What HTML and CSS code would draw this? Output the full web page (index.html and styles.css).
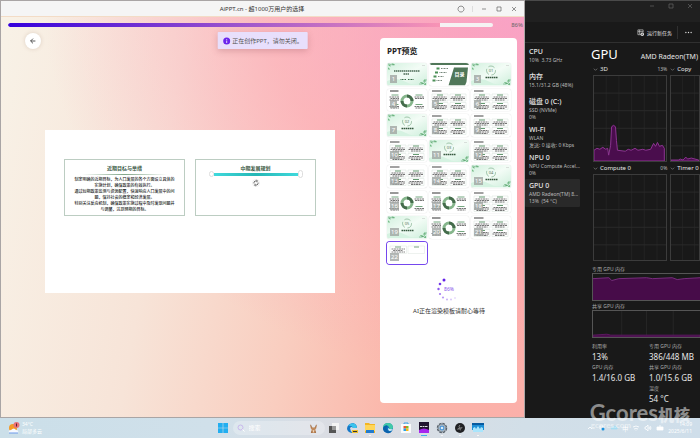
FILE: index.html
```html
<!DOCTYPE html>
<html lang="zh-CN">
<head>
<meta charset="UTF-8">
<meta name="viewport" content="width=device-width, initial-scale=1.0">
<title>AiPPT.cn - 超1000万用户的选择</title>
<link rel="stylesheet" href="styles.css">
</head>
<body>

<!-- slide thumbnails -->
<svg class="defs" width="0" height="0" aria-hidden="true">
    <defs>
        <linearGradient id="mint" x1="0" y1="0" x2="1" y2="1">
            <stop offset="0" stop-color="#d3f1df"/>
            <stop offset=".5" stop-color="#f3fcf6"/>
            <stop offset="1" stop-color="#cdeedb"/>
        </linearGradient>
        <symbol id="leaves" viewBox="0 0 80 45">
            <rect width="80" height="45" fill="url(#mint)"/>
            <path d="M0 36Q20 27 38 38T80 33V45H0z" fill="#d5f2e1"/>
            <path d="M2 3q5-1 6 4q-5 0-6-4M9 1q6-1 7 3q-5 2-7-3M2 9q4 0 3 5q-4-1-3-5M77 32q-5 1-4 6q5-1 4-6M66 38q5-1 8 3q-5 3-8-3M78 40q-4 0-4 4h4z" fill="#72b884"/>
            <path d="M1 1q8 3 12 3M64 42q10 2 15-9" fill="none" stroke="#539768"/>
            <path d="M70 5h6" stroke="#888" stroke-dasharray="1 1"/>
        </symbol>
        <symbol id="cover" viewBox="0 0 80 45">
            <use href="#leaves" width="80" height="45"/>
            <path d="M14 16h52M33 22h12" stroke="#4b6b55" stroke-width="3" stroke-dasharray="3 1"/>
            <path d="M27 33h12M42 33h12" stroke="#3d6c4b" stroke-width="2" stroke-dasharray="2 1"/>
        </symbol>
        <symbol id="contents" viewBox="0 0 80 45">
            <rect width="80" height="45" fill="#fff"/>
            <path d="M0 0h80v4H4zM50 9h28l-3 29-3 7H39z" fill="#507759"/>
            <path d="M24 11h14M21 19h14M18 27h12M15 35h12" stroke="#75877a" stroke-width="2" stroke-dasharray="2 1"/>
            <path d="M15 11h6M12 19h6M9 27h6M7 35h6" stroke="#4b9057" stroke-width="4"/>
            <text x="51" y="26" font-size="10" font-weight="bold" fill="#fff">目录</text>
        </symbol>
        <symbol id="section" viewBox="0 0 80 45">
            <use href="#leaves" width="80" height="45"/>
            <circle cx="40" cy="15" r="9" fill="none" stroke="#579267" stroke-dasharray="13 5"/>
            <path d="M29 29h25" stroke="#36583f" stroke-width="3" stroke-dasharray="3 1"/>
        </symbol>
        <symbol id="donut" viewBox="0 0 80 45">
            <rect width="80" height="45" fill="#fff"/>
            <path d="M6 4h17" stroke="#333" stroke-width="2"/>
            <path d="M9 12h14M57 12h14M9 31h14M57 31h14" stroke="#75a780" stroke-width="2"/>
            <path d="M5 16h20M7 19h17M5 22h20M5 35h20M7 38h17M55 16h20M56 19h18M55 35h20M57 38h16" stroke="#777" stroke-width="2" stroke-dasharray="4 1"/>
            <circle cx="40" cy="24" r="10" fill="none" stroke="#86b68c" stroke-width="6"/>
            <path d="M40 14a10 10 0 0 1 10 10M40 34a10 10 0 0 1-10-10" fill="none" stroke="#456c4c" stroke-width="6"/>
        </symbol>
        <symbol id="cards" viewBox="0 0 80 45">
            <rect width="80" height="45" fill="#fff"/>
            <path d="M6 4h19" stroke="#444" stroke-width="2"/>
            <path d="M6 10h32v14H6zM42 10h32v14H42zM6 27h32v14H6zM42 27h32v14H42z" fill="#fff" stroke="#d7e2da"/>
            <path d="M16 12h12M52 12h12M16 29h12M52 29h12" stroke="#659971" stroke-width="2"/>
            <path d="M9 16h26M7 19h30M11 22h22M45 16h26M43 19h30M48 22h20M9 33h26M7 36h30M11 39h22M45 33h26M43 36h30M48 39h20" stroke="#777" stroke-width="2" stroke-dasharray="4 1"/>
        </symbol>
        <symbol id="draft" viewBox="0 0 80 45">
            <rect width="80" height="45" fill="#fff"/>
            <path d="M6 8h33v15H6zM42 8h33v15H42z" fill="#fff" stroke="#dde5df"/>
            <path d="M16 10h12M54 10h10" stroke="#78a382" stroke-width="2"/>
            <path d="M9 14h27M12 17h20M9 20h27" stroke="#888" stroke-width="2" stroke-dasharray="4 1"/>
        </symbol>
        <pattern id="grid" width="13" height="18" patternUnits="userSpaceOnUse">
            <path d="M13 0V18M0 17.5H13" fill="none" stroke="#292929"/>
        </pattern>
    </defs>
</svg>

<div class="screen">
    <div class="windows">

        <main class="app">
            <header class="titlebar">
                <h1>AiPPT.cn - 超1000万用户的选择</h1>
                <div class="window-buttons">
                    <button aria-label="刷新"><svg viewBox="0 0 8 8"><path d="M3 1.2a3 3 0 1 0 2 0M3 1.2h2" /></svg></button>
                    <span class="separator"></span>
                    <button aria-label="最小化"><svg viewBox="0 0 8 8"><path d="M2 4h4"/></svg></button>
                    <button aria-label="最大化"><svg viewBox="0 0 8 8"><path d="M2 2h4v4H2z"/></svg></button>
                    <button aria-label="关闭"><svg viewBox="0 0 8 8"><path d="M2 2l4 4M6 2L2 6"/></svg></button>
                </div>
            </header>

            <div class="progress-row">
                <div class="progress" role="progressbar" aria-label="生成进度" aria-valuenow="86"><div class="progress-fill"></div></div>
                <span>86%</span>
            </div>

            <div class="workspace">
                <div class="stage">
                    <button class="back" aria-label="返回"><svg viewBox="0 0 10 10"><path d="M8 5H2M5 2L2 5l3 3"/></svg></button>
                    <div class="slide">
                        <section class="slide-box">
                            <h2>近期目标与举措</h2>
                            <hr>
                            <p>制定明确的近期目标，为人口发展的各个方面设立具体的<br>实施计划，确保政策的有效执行。<br>通过短期政策监测与资源配置，快速响应人口发展中的问<br>题，保持社会的稳定和经济发展。<br>特别关注反应机制，确保政策实施过程中及时发现问题并<br>与调整，达到预期的目标。</p>
                        </section>
                        <section class="slide-box">
                            <h2>中期发展规划</h2>
                            <div class="selected-line"><i></i><b></b><i class="tall"></i></div>
                            <svg class="rotate" viewBox="0 0 8 8"><circle cx="4" cy="4" r="3.5" fill="#fff" stroke="#ddd" stroke-width=".5"/><path d="M2 4.5V3l1-1h2.2M6 3.5V5L5 6H2.8M4.5 1.2l1 .8-1 .8M3.5 5.2l-1 .8 1 .8" fill="none" stroke="#333" stroke-width=".7"/></svg>
                        </section>
                    </div>
                </div>

                <aside class="preview">
                    <h2>PPT预览</h2>
                    <div class="thumbs">
                        <div class="thumb"><svg><use href="#cover"/></svg><span>1</span></div>
                        <div class="thumb"><svg><use href="#contents"/></svg></div>
                        <div class="thumb"><svg><use href="#section"/></svg><em>01</em><span>3</span></div>
                        <div class="thumb"><svg><use href="#donut"/></svg><span>4</span></div>
                        <div class="thumb"><svg><use href="#cards"/></svg><span>5</span></div>
                        <div class="thumb"><svg><use href="#cards"/></svg><span>6</span></div>
                        <div class="thumb"><svg><use href="#section"/></svg><em>02</em><span>7</span></div>
                        <div class="thumb"><svg><use href="#cards"/></svg><span>8</span></div>
                        <div class="thumb"><svg><use href="#cards"/></svg><span>9</span></div>
                        <div class="thumb"><svg><use href="#cards"/></svg><span>10</span></div>
                        <div class="thumb"><svg><use href="#section"/></svg><em>03</em><span>11</span></div>
                        <div class="thumb"><svg><use href="#cards"/></svg><span>12</span></div>
                        <div class="thumb"><svg><use href="#cards"/></svg><span>13</span></div>
                        <div class="thumb"><svg><use href="#cards"/></svg><span>14</span></div>
                        <div class="thumb"><svg><use href="#section"/></svg><em>04</em><span>15</span></div>
                        <div class="thumb"><svg><use href="#donut"/></svg><span>16</span></div>
                        <div class="thumb"><svg><use href="#donut"/></svg><span>17</span></div>
                        <div class="thumb"><svg><use href="#cards"/></svg><span>18</span></div>
                        <div class="thumb"><svg><use href="#section"/></svg><em>05</em><span>19</span></div>
                        <div class="thumb"><svg><use href="#donut"/></svg><span>20</span></div>
                        <div class="thumb"><svg><use href="#cards"/></svg><span>21</span></div>
                        <div class="thumb current"><svg><use href="#draft"/></svg><span>22</span></div>
                    </div>
                    <div class="loading">
                        <div class="spinner">
                            <svg viewBox="0 0 24 24" fill="#6420e8">
                                <circle cx="7" cy="3" r="1.5"/>
                                <circle cx="3" cy="7" r="1.3" opacity=".9"/>
                                <circle cx="1.5" cy="12" r="1.2" opacity=".75"/>
                                <circle cx="3" cy="17" r="1.1" opacity=".6"/>
                                <circle cx="6" cy="20.500" r="1.1" opacity=".45"/>
                                <circle cx="10" cy="22.500" r="1" opacity=".35"/>
                                <circle cx="14" cy="22.500" r="1" opacity=".25"/>
                                <circle cx="18" cy="21" r="1" opacity=".15"/>
                            </svg>
                            <span>86%</span>
                        </div>
                        <p>AI正在渲染模板请耐心等待</p>
                    </div>
                </aside>
            </div>

            <div class="toast" role="status">
                <svg viewBox="0 0 8 8"><circle cx="4" cy="4" r="3.500" fill="#6b25ec"/><path d="M4 2v.8M4 3.500V6" stroke="#fff" stroke-width=".8"/></svg>
                正在创作PPT，请勿关闭。
            </div>
        </main>

        <section class="taskmgr">
            <header class="tm-title">
                <button aria-label="最小化"><svg viewBox="0 0 8 8"><path d="M2 4h4"/></svg></button>
                <button aria-label="最大化"><svg viewBox="0 0 8 8"><path d="M2 2h4v4H2z"/></svg></button>
                <button aria-label="关闭"><svg viewBox="0 0 8 8"><path d="M2 2l4 4M6 2L2 6"/></svg></button>
            </header>
            <div class="tm-toolbar">
                <button class="run-task">
                    <svg viewBox="0 0 8 8"><path d="M4 6.500H1V1h6v3M1 3h6M3 1v5" fill="none" stroke="#ddd" stroke-width=".7"/><circle cx="6" cy="6" r="2" fill="#eee"/><path d="M5 6h2M6 5v2" stroke="#222" stroke-width=".6"/></svg>
                    运行新任务
                </button>
                <button class="more" aria-label="更多"><svg viewBox="0 0 8 8" fill="#ddd"><circle cx="1" cy="4" r=".8"/><circle cx="4" cy="4" r=".8"/><circle cx="7" cy="4" r=".8"/></svg></button>
            </div>
            <div class="tm-body">
                <ul class="tm-list">
                    <li><h3>CPU</h3><p>10%&nbsp; 3.73 GHz</p></li>
                    <li><h3>内存</h3><p>15.1/31.2 GB (48%)</p></li>
                    <li><h3>磁盘 0 (C:)</h3><p>SSD (NVMe)</p><p>0%</p></li>
                    <li><h3>Wi-Fi</h3><p>WLAN</p><p>发送: 0 接收: 0 Kbps</p></li>
                    <li><h3>NPU 0</h3><p>NPU Compute Accel...</p><p>0%</p></li>
                    <li class="active"><h3>GPU 0</h3><p>AMD Radeon(TM) 8...</p><p>13%&nbsp; (54 °C)</p></li>
                </ul>
                <div class="tm-detail">
                    <div class="tm-heading"><h2>GPU</h2><span>AMD Radeon(TM)</span></div>
                    <div class="engines">
                        <figure>
                            <figcaption><svg viewBox="0 0 6 6"><path d="M1 2l2 2 2-2"/></svg>3D<small>13%</small></figcaption>
                            <svg class="chart" viewBox="0 0 74 87" preserveAspectRatio="none">
                                <rect width="74" height="87" fill="url(#grid)"/>
                                <path d="M0 87V76l3-2 3 1 3-2 3 2 2-1 1 7 2-10 1-19q2-3 4 0l1 14 1 10 8 1 3-2 3 1 4-2 3 2 5-1 3 1 5-1 3-6 2 3 2-4 2 4 3-1 2 3v13z" fill="#4a0d4d" stroke="#8d3592"/>
                            </svg>
                        </figure>
                        <figure>
                            <figcaption><svg viewBox="0 0 6 6"><path d="M1 2l2 2 2-2"/></svg>Copy</figcaption>
                            <svg class="chart" viewBox="0 0 30 87" preserveAspectRatio="none">
                                <rect width="30" height="87" fill="url(#grid)"/>
                                <path d="M0 87v-1h8l2-1 3 1 3-3 2 2 4-1 8 2v1z" fill="#4a0d4d" stroke="#8d3592"/>
                            </svg>
                        </figure>
                        <figure>
                            <figcaption><svg viewBox="0 0 6 6"><path d="M1 2l2 2 2-2"/></svg>Compute 0<small>0%</small></figcaption>
                            <svg class="chart" viewBox="0 0 74 87" preserveAspectRatio="none"><rect width="74" height="87" fill="url(#grid)"/></svg>
                        </figure>
                        <figure>
                            <figcaption><svg viewBox="0 0 6 6"><path d="M1 2l2 2 2-2"/></svg>Timer 0</figcaption>
                            <svg class="chart" viewBox="0 0 30 87" preserveAspectRatio="none"><rect width="30" height="87" fill="url(#grid)"/></svg>
                        </figure>
                    </div>
                    <figure class="memory">
                        <figcaption>专用 GPU 内存</figcaption>
                        <svg class="chart" viewBox="0 0 108 28" preserveAspectRatio="none"><path d="M0 28V5l16-1 3 3 7-2 28-1 6 1 20-1 5 2 7-1 16-1v24z" fill="#470c49"/><path d="M0 5l16-1 3 3 7-2 28-1 6 1 20-1 5 2 7-1 16-1" fill="none" stroke="#7a2e7f"/></svg>
                    </figure>
                    <figure class="memory">
                        <figcaption>共享 GPU 内存</figcaption>
                        <svg class="chart" viewBox="0 0 108 28" preserveAspectRatio="none"><path d="M29 0V28M54 0V28M81 0V28" stroke="#262626"/><path d="M0 28v-2l14-1 4 1h90v2z" fill="#470c49" stroke="#5c1a60"/></svg>
                    </figure>
                    <dl class="stats">
                        <div><dt>利用率</dt><dd>13%</dd></div>
                        <div><dt>专用 GPU 内存</dt><dd>386/448 MB</dd></div>
                        <div><dt>GPU 内存</dt><dd>1.4/16.0 GB</dd></div>
                        <div><dt>共享 GPU 内存</dt><dd>1.0/15.6 GB</dd></div>
                        <div class="second"><dt>温度</dt><dd>54 °C</dd></div>
                    </dl>
                </div>
            </div>
        </section>
    </div>

    <footer class="taskbar">
        <div class="weather">
            <svg viewBox="0 0 12 12"><circle cx="5" cy="6" r="4" fill="#f49b28"/><path d="M1 11q-1-3 2-3 3-3 5 0 3 0 2 3z" fill="#f5f9ff"/><path d="M1 11h9" stroke="#6f9bea"/><circle cx="8.500" cy="3" r="3" fill="#e8707a"/><path d="M8.500 1.500v3" stroke="#5c1f28"/></svg>
            <p>34°C<br>局部多云</p>
        </div>
        <div class="dock">
            <button aria-label="开始"><svg viewBox="0 0 12 12"><path d="M1 1h4.700v4.700H1zM6.300 1H11v4.700H6.300zM1 6.300h4.700V11H1zM6.300 6.300H11V11H6.300z" fill="#22aef0"/></svg></button>
            <label class="search">
                <svg viewBox="0 0 8 8" fill="none"><circle cx="3.500" cy="3.500" r="2.500" stroke="#c8b8ec"/><path d="M5.500 5.500L7.500 7.500" stroke="#fff"/></svg>
                <input type="text" placeholder="搜索" aria-label="搜索">
                <svg class="deer" viewBox="0 0 10 12"><path d="M1 1l2 3 1 1h2l1-1 2-3-1 5-1 1 1 4H2l1-4-1-1z" fill="#c08a5c"/><path d="M4 8h2l-1 3z" fill="#f1dcc6"/><path d="M2 2l1 3M8 2L7 5M3 11V9M7 11V9" stroke="#7d4f31" stroke-width=".5"/></svg>
            </label>
            <button aria-label="任务视图"><svg viewBox="0 0 12 12"><path d="M4 1h7v7H4z" fill="#f4f4f4"/><path d="M1 4h7v7H1z" fill="#555"/><path d="M4 4h4v4H4z" fill="#999"/></svg></button>
            <button aria-label="Edge Canary"><svg viewBox="0 0 12 12"><path d="M1 7q0-5 6-6 4 1 4 5H7q-1-2-3 0 0 3 3 5Q2 11 1 7" fill="#1678c8"/><path d="M2 4q3-4 7-2 2 2 2 4H7Q6 3 2 4" fill="#3ac3ed"/><path d="M6 8h6v3H6z" fill="#eebf2c"/><path d="M7 9.500h4" stroke="#333"/></svg></button>
            <button class="running" aria-label="文件资源管理器"><svg viewBox="0 0 12 12"><path d="M1 1h4l1 1h5v9H1z" fill="#f3b522"/><path d="M1 3h10v6H1z" fill="#ffd65a"/><path d="M2 8h8v3H2z" fill="#217bce"/></svg></button>
            <button aria-label="Edge"><svg viewBox="0 0 12 12"><circle cx="6" cy="6" r="5" fill="#1277bd"/><path d="M1 6Q1 1 6 1t5 5q-1 2-4 2 1-3-1-4-3-1-5 2" fill="#42c9a8"/><path d="M1 6q2-4 5-2-3 2 0 5 2 1 4 0-2 3-5 2-4-1-4-5" fill="#0c62ad"/><path d="M6 6q2 2 5 1-1 2-3 2T6 6" fill="#d8eefa"/></svg></button>
            <button aria-label="Microsoft Store"><svg viewBox="0 0 12 12"><path d="M4 3V1h4v2" fill="none" stroke="#3ba1e4"/><path d="M1 2h10v9H1z" fill="#f9fbfc"/><path d="M3.500 4H6v2.500H3.500z" fill="#ee5532"/><path d="M6 4h2.500v2.500H6z" fill="#82bb29"/><path d="M3.500 6.500H6V9H3.500z" fill="#25a2e8"/><path d="M6 6.500h2.500V9H6z" fill="#f9b717"/></svg></button>
            <button class="running selected" aria-label="AiPPT"><svg viewBox="0 0 12 12"><path d="M1 0h10v11H1z" fill="#201330"/><path d="M1 8q5-3 10 0v3H1z" fill="#a626ee"/><path d="M2 4.500h8" stroke="#ddd" stroke-dasharray="2 .5"/></svg></button>
            <button class="running" aria-label="设置"><svg viewBox="0 0 12 12" fill="none"><circle cx="6" cy="6" r="4.500" stroke="#59626b" stroke-width="1.500" stroke-dasharray="2.700 .8"/><circle cx="6" cy="6" r="3.500" stroke="#7f8e9b"/><circle cx="6" cy="6" r="2" fill="#d9ecfc" stroke="#247dca"/></svg></button>
            <button class="running" aria-label="OBS"><svg viewBox="0 0 12 12"><circle cx="6" cy="6" r="5" fill="#202124"/><path d="M6 3q-2 1 0 3 2 1 2-1M6 6q-3 0-2 2M6 6q-1 2 1 2" fill="none" stroke="#999" stroke-width=".8"/></svg></button>
            <button class="running" aria-label="任务管理器"><svg viewBox="0 0 12 12"><path d="M0 1h12v7H0z" fill="#1d8fd6"/><path d="M1 6l2-1 1 2 2-3 2 3 1-2 2 1v4H1z" fill="#a9e5fc"/><path d="M0 1h12v2H0z" fill="#085a9f"/></svg></button>
        </div>
        <div class="tray">
            <svg viewBox="0 0 8 8"><path d="M2 5l2-2 2 2"/></svg>
            <svg viewBox="0 0 8 8"><path d="M2 5V2h3v3z"/><circle cx="5" cy="5" r="1.500" fill="#1a91dd" stroke="none"/></svg>
            <svg viewBox="0 0 8 8"><path d="M1 5q0-2 2-2 2-2 3 0 2 1 1 2z" fill="#a6ddf2" stroke="#a6ddf2"/></svg>
            <span>中</span>
            <svg viewBox="0 0 8 8"><path d="M1 3q3-2 6 0M2 5q2-1 4 0M4 6.500v.5"/></svg>
            <svg viewBox="0 0 8 8"><path d="M1 3h1l2-2v6L2 5H1zM5 3q1 1 0 2M6 2q2 2 0 4"/></svg>
            <svg viewBox="0 0 8 8"><path d="M1 3h6v3H1zM3 2h2" fill="#fff"/></svg>
            <p>14:09<br>2025/6/11</p>
        </div>
    </footer>

    <div class="watermark"><strong>Gcores<b>机核</b></strong><span>gcores.com</span></div>
</div>

</body>
</html>
```
FILE: styles.css
```css
* {
    box-sizing: border-box;
    margin: 0;
    padding: 0;
}

body {
    font-family: "Noto Sans", "Noto Sans CJK SC", sans-serif;
    font-size: 6px;
    color: #333;
}

button {
    display: flex;
    align-items: center;
    justify-content: center;
    border: none;
    background: none;
    font: inherit;
    color: inherit;
    cursor: pointer;
}

svg {
    display: block;
    flex: none;
}

.defs {
    position: absolute;
}

.screen {
    position: relative;
    display: flex;
    flex-direction: column;
    height: 100vh;
    overflow: hidden;
}

.windows {
    flex: 1;
    display: grid;
    grid-template-columns: 3fr 1fr;
    min-height: 0;
}

/* AiPPT window */
.app {
    position: relative;
    display: flex;
    flex-direction: column;
    min-width: 0;
    border: 1px solid #a9a5a5;
    background:
        radial-gradient(ellipse at 100% 0%, rgba(248, 158, 207, 0.8), rgba(255, 156, 179, 0.5) 35%, rgba(255, 170, 170, 0) 65%),
        linear-gradient(100deg, #f8f2e7 0%, #f7e4d8 32%, #f9cdbf 58%, #fbb4a8 80%, #fbb0aa 100%);
}

.titlebar {
    display: flex;
    align-items: center;
    justify-content: center;
    height: 16px;
    flex: none;
    background: #f5f5f5;
    border-bottom: 1px solid #f3dcc6;
}

.titlebar h1 {
    flex: 1;
    padding-left: 66px;
    text-align: center;
    font-size: 6px;
    font-weight: normal;
}

.window-buttons {
    display: flex;
    align-items: center;
    gap: 7px;
    padding-right: 6px;
}

.window-buttons svg,
.tm-title svg {
    width: 8px;
    height: 8px;
    fill: none;
    stroke: #666;
    stroke-width: 0.7;
}

.separator {
    width: 1px;
    height: 6px;
    background: #ddd;
}

.progress-row {
    display: flex;
    align-items: center;
    gap: 18px;
    height: 16px;
    padding: 0 1px 0 7px;
    flex: none;
    color: #666;
}

.progress {
    flex: 1;
    height: 4px;
    border-radius: 2px;
    background: #f5f2f3;
    overflow: hidden;
}

.progress-fill {
    width: 89%;
    height: 100%;
    border-radius: 2px 0 0 2px;
    background: linear-gradient(90deg, #3500dc, #a057cc 55%, #f894b5);
}

.workspace {
    flex: 1;
    display: flex;
    gap: 45px;
    min-height: 0;
    padding: 5px 7px 14px 24px;
}

.stage {
    flex: 1;
    display: flex;
    flex-direction: column;
    align-items: flex-start;
    min-width: 0;
}

.back {
    width: 16px;
    height: 16px;
    flex: none;
    margin-top: -5px;
    border-radius: 50%;
    background: #fff;
    box-shadow: 0 0 4px rgba(120, 80, 60, 0.2);
}

.back svg {
    width: 8px;
    height: 8px;
    fill: none;
    stroke: #333;
}

.slide {
    align-self: stretch;
    display: grid;
    grid-template-columns: 1fr 1fr;
    align-items: start;
    gap: 10px;
    aspect-ratio: 16 / 9;
    margin: 81px 0 0 20px;
    padding: 29px 19px;
    background: #fff;
}

.slide-box {
    display: flex;
    flex-direction: column;
    align-items: center;
    height: 57px;
    padding-top: 4px;
    border: 1px solid #bccdc2;
    text-align: center;
}

.slide-box h2 {
    font-size: 5px;
    line-height: 8px;
    color: #395743;
}

.slide-box hr {
    width: 72%;
    height: 1px;
    margin: 2px 0;
    border: none;
    background: linear-gradient(90deg, #fff, #80a487, #fff);
}

.slide-box p {
    font-size: 4px;
    line-height: 6px;
    font-weight: 500;
    white-space: nowrap;
    color: #222;
}

.selected-line {
    display: flex;
    align-items: center;
    width: 94px;
    height: 8px;
    margin-top: -2px;
}

.selected-line b {
    flex: 1;
    height: 3px;
    background: linear-gradient(90deg, #3fd9dc, #25b7b5 50%, #3fd9dc);
}

.selected-line i {
    width: 5px;
    height: 6px;
    border: 1px solid #ddd;
    border-radius: 3px;
    background: #fff;
}

.selected-line .tall {
    height: 8px;
}

.rotate {
    width: 8px;
    height: 8px;
    margin-top: 1px;
}

/* preview panel */
.preview {
    width: 137px;
    padding: 7px 6px 7px 7px;
    border-radius: 4px;
    background: #fff;
}

.preview h2 {
    font-size: 8px;
    line-height: 12px;
    color: #222;
}

.thumbs {
    display: grid;
    grid-template-columns: repeat(3, 1fr);
    gap: 3px 2px;
    margin-top: 6px;
}

.thumb {
    position: relative;
    aspect-ratio: 16 / 9;
    border-radius: 3px;
    overflow: hidden;
    box-shadow: 0 0 1px #bbb;
}

.thumb svg {
    width: 100%;
    height: 100%;
}

/* page number and section number lie over the thumbnail */
.thumb span {
    position: absolute;
    left: 3px;
    bottom: 3px;
    min-width: 7px;
    padding: 0 1px;
    background: rgba(160, 165, 162, 0.8);
    color: #fff;
    font-size: 6px;
    line-height: 8px;
    text-align: center;
}

.thumb em {
    position: absolute;
    top: 4px;
    left: 0;
    width: 100%;
    text-align: center;
    font-size: 4px;
    line-height: 7px;
    font-style: normal;
    color: #56775e;
}

.thumb.current {
    box-shadow: 0 0 0 1px #7547ee;
}

.loading {
    display: flex;
    flex-direction: column;
    align-items: center;
    gap: 5px;
    margin-top: 13px;
    color: #333;
}

.spinner {
    display: grid;
    place-items: center;
    color: #8250e8;
    font-size: 5px;
}

.spinner > * {
    grid-area: 1 / 1;
}

.spinner svg {
    width: 24px;
    height: 24px;
}

.toast {
    position: absolute;
    top: 31px;
    left: 50%;
    transform: translateX(-50%);
    display: flex;
    align-items: center;
    gap: 2px;
    height: 17px;
    padding: 0 5px;
    border-radius: 1px;
    background: #e8dffc;
    box-shadow: 0 2px 6px rgba(150, 80, 90, 0.3);
    color: #555;
    white-space: nowrap;
}

.toast svg {
    width: 8px;
    height: 8px;
}

/* task manager */
.taskmgr {
    display: flex;
    flex-direction: column;
    min-width: 0;
    border-top: 1px solid #4a4a4a;
    background: #191919;
    color: #e6e6e6;
    overflow: hidden;
}

.tm-title {
    display: flex;
    justify-content: flex-end;
    gap: 11px;
    height: 21px;
    padding: 1px 6px 0 0;
    background: #202020;
}

.tm-title button {
    height: 8px;
}

.tm-toolbar {
    display: flex;
    align-items: center;
    justify-content: flex-end;
    height: 21px;
    border-bottom: 1px solid #303030;
}

.run-task {
    gap: 3px;
    padding-right: 5px;
    font-size: 5px;
}

.run-task svg,
.more svg {
    width: 7px;
    height: 7px;
}

.more {
    height: 13px;
    padding: 0 8px 0 7px;
    border-left: 1px solid #303030;
}

.tm-body {
    flex: 1;
    display: flex;
    gap: 11px;
    min-height: 0;
}

.tm-list {
    width: 55px;
    flex: none;
    padding-top: 2px;
    list-style: none;
}

.tm-list li {
    min-height: 25px;
    padding: 2px 0 2px 4px;
    border-radius: 1px;
}

.tm-list .active {
    background: #292929;
}

.tm-list h3 {
    font-size: 7px;
    line-height: 10px;
    font-weight: 500;
}

.tm-list p {
    white-space: nowrap;
    font-size: 5px;
    line-height: 7px;
    color: #bbb;
}

.tm-detail {
    flex: 1;
    min-width: 0;
}

.tm-heading {
    display: flex;
    align-items: baseline;
    justify-content: space-between;
    height: 20px;
    padding-right: 2px;
}

.tm-heading h2 {
    font-size: 13px;
    line-height: 23px;
    font-weight: normal;
    color: #fff;
}

.tm-heading span {
    font-size: 7px;
}

.engines {
    display: grid;
    grid-template-columns: 5fr 2fr;
    column-gap: 3px;
    padding-left: 2px;
}

figcaption {
    display: flex;
    align-items: center;
    height: 12px;
    font-size: 6px;
    white-space: nowrap;
}

figcaption svg {
    width: 5px;
    height: 5px;
    margin-right: 2px;
    fill: none;
    stroke: #999;
    stroke-width: 0.7;
}

figcaption small {
    margin-left: auto;
    font-size: 5px;
    color: #bbb;
}

.chart {
    width: 100%;
    height: 87px;
    border: 1px solid #3c3c3c;
}

.memory {
    padding-left: 1px;
}

.memory figcaption {
    height: 9px;
    font-size: 5px;
    color: #aaa;
}

.memory .chart {
    height: 28px;
    border-color: #555;
    border-right: none;
}

.engines + .memory {
    margin-top: 3px;
}

.stats {
    display: grid;
    grid-template-columns: 57px 1fr;
    padding: 4px 0 0 1px;
    white-space: nowrap;
}

.stats dt {
    font-size: 5px;
    line-height: 9px;
    color: #aaa;
}

.stats dd {
    font-size: 8px;
    line-height: 12px;
}

.stats .second {
    grid-column: 2;
}

/* taskbar */
.taskbar {
    display: grid;
    grid-template-columns: 1fr auto 1fr;
    align-items: center;
    flex: none;
    height: 20px;
    padding: 0 8px;
    background: linear-gradient(90deg, #cbdfe9, #d0e0ea 30%, #dcdce2 50%, #d2dfe8 75%, #cfdeea);
}

.weather {
    display: flex;
    align-items: center;
    gap: 2px;
    color: #fff;
    font-size: 5px;
    line-height: 7px;
}

.weather svg {
    width: 12px;
    height: 12px;
}

.dock {
    display: flex;
    align-items: center;
    gap: 6px;
}

.dock button {
    position: relative;
}

.dock button svg {
    width: 12px;
    height: 12px;
}

.search {
    display: flex;
    align-items: center;
    gap: 4px;
    width: 92px;
    height: 14px;
    margin-left: -2px;
    margin-right: -3px;
    padding: 0 7px 0 4px;
    border-radius: 7px;
    background: rgba(255, 255, 255, 0.25);
}

.search svg {
    width: 8px;
    height: 8px;
}

.search .deer {
    width: 9px;
    height: 11px;
}

.search input {
    flex: 1;
    min-width: 0;
    border: none;
    outline: none;
    background: none;
    font: inherit;
}

.search input::placeholder {
    color: #fff;
    opacity: 1;
}

.running::after {
    content: "";
    position: absolute;
    bottom: -2px;
    left: 5px;
    width: 2px;
    height: 1px;
    background: #f5f5f5;
}

.selected::after {
    left: 3px;
    width: 6px;
    background: #3fb2ea;
}

.tray {
    display: flex;
    align-items: center;
    justify-content: flex-end;
    gap: 4px;
    color: #fff;
}

.tray svg {
    width: 8px;
    height: 8px;
    fill: none;
    stroke: #fff;
    stroke-width: 0.8;
}

.tray p {
    text-align: right;
    font-size: 5px;
    line-height: 7px;
}

/* site mark over the corner of the screen */
.watermark {
    position: absolute;
    right: 10px;
    bottom: 15px;
    color: rgba(255, 255, 255, 0.5);
    font-family: Lato, "Noto Sans CJK SC", sans-serif;
}

.watermark strong {
    display: block;
    font-size: 22px;
    line-height: 16px;
    white-space: nowrap;
}

.watermark b {
    font-size: 16px;
}

.watermark span {
    position: absolute;
    top: 16px;
    left: 1px;
    font-size: 8px;
    line-height: 8px;
    font-weight: bold;
}
```
